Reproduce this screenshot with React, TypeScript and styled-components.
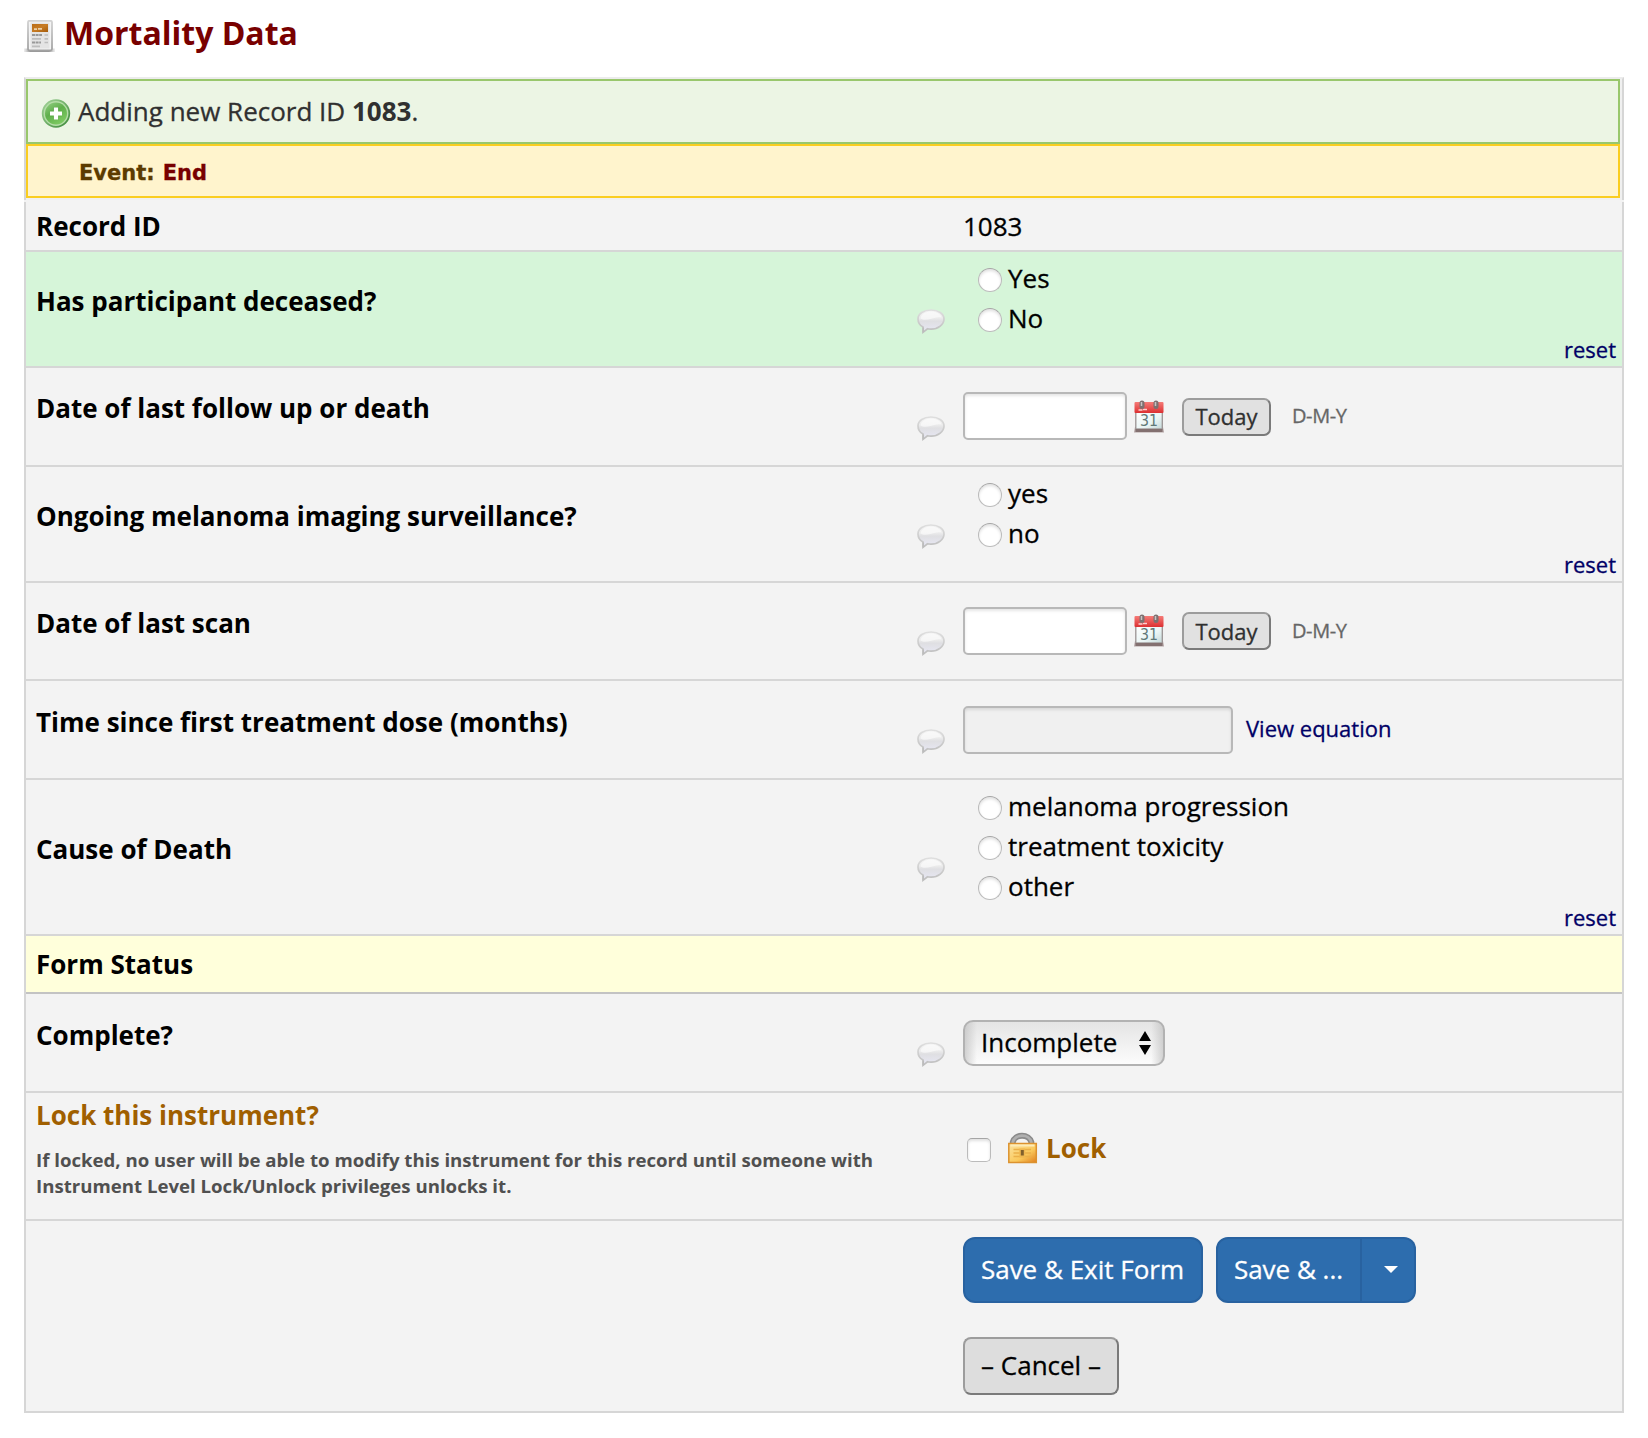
import React from 'react';
import styled, { createGlobalStyle, css } from 'styled-components';

const GlobalStyle = createGlobalStyle`
  * { box-sizing: border-box; }
  body {
    margin: 0;
    background: #fff;
    color: #000;
    font-family: 'Open Sans', 'Noto Sans', sans-serif;
    font-size: 26px;
    line-height: 36px;
    -webkit-text-stroke: 0.3px;
  }
  b, strong { -webkit-text-stroke: 0; }
  button, input, select { font: inherit; margin: 0; -webkit-text-stroke: inherit; }
`;

const Page = styled.main`
  width: 1648px;
  padding: 11px 24px 25px;
`;

const Title = styled.h1`
  display: flex;
  align-items: center;
  gap: 8px;
  height: 44px;
  margin: 0 0 22px;
  color: #780000;
  font-size: 32px;
  font-weight: 700;
  line-height: 44px;
  -webkit-text-stroke: 0;
  svg { margin-top: 6px; }
`;

const Banners = styled.section`
  height: 123px;
  padding-right: 2px;
  border: 2px solid #d6d6d6;
  border-top-color: #ececec;
  border-bottom: 0;
  background: #f0f0f0;
`;

const RecordBanner = styled.div`
  display: flex;
  align-items: center;
  gap: 7px;
  height: 65px;
  padding: 3px 13px 0;
  border: 2px solid #99c76c;
  background: #ecf5e4;
  color: #303030;
  p { margin: 0 0 5px; }
`;

const EventBanner = styled.div`
  display: flex;
  align-items: center;
  gap: 8px;
  height: 54px;
  padding: 3px 0 0 51px;
  border: 2px solid #facd20;
  background: #fff4cd;
  color: #5c3b00;
  font-family: 'DejaVu Sans', Verdana, sans-serif;
  font-size: 21px;
  font-weight: 700;
  -webkit-text-stroke: 0.3px;
  strong { color: #780000; -webkit-text-stroke: 0.3px; }
`;

const Form = styled.form`
  margin-top: 2px;
  border: solid #d6d6d6;
  border-width: 0 2px;
  box-shadow: 0 -2px 0 #f3f3f3;
`;

const Row = styled.div<{ $h: number; $tone?: string; $line?: string }>`
  display: grid;
  grid-template-columns: 884px 53px 1fr;
  height: ${(p) => p.$h}px;
  border-bottom: 2px solid ${(p) => p.$line || '#d6d6d6'};
  background: ${(p) => p.$tone || '#f3f3f3'};
`;

const Label = styled.div<{ $lift?: number }>`
  display: flex;
  flex-direction: column;
  justify-content: center;
  padding: 0 0 ${(p) => p.$lift || 0}px 10px;
  font-weight: 700;
  white-space: nowrap;
  -webkit-text-stroke: 0;
`;

const LockTitle = styled.div`
  color: #a05f00;
`;

const LockNote = styled.div`
  margin-top: 14px;
  color: #505050;
  font-size: 18.64px;
  line-height: 26px;
`;

const CommentCell = styled.div`
  display: flex;
  align-items: center;
  padding: 24px 0 0 6px;
`;

const Value = styled.div`
  display: flex;
  align-items: center;
`;

const Choices = styled.div`
  display: flex;
  flex-direction: column;
  padding: 8px 6px 0 15px;
`;

const Choice = styled.label`
  display: flex;
  align-items: center;
  gap: 6px;
  height: 40px;
  span { margin-bottom: 4px; }
`;

const toggle = css`
  appearance: none;
  width: 24px;
  height: 24px;
  border: 1px solid #bbb;
  border-top-color: #a5a5a5;
  background: #fff;
  box-shadow: inset 0 2px 3px rgba(0, 0, 0, 0.12);
`;

const Radio = styled.input`
  ${toggle}
  border-radius: 50%;
`;

const Checkbox = styled.input`
  ${toggle}
  margin-left: 4px;
  border-radius: 5px;
`;

const link = css`
  color: #000066;
  font-size: 22px;
  text-decoration: none;
`;

const Reset = styled.a`
  ${link}
  align-self: flex-end;
  height: 26px;
  line-height: 18px;
`;

const EquationLink = styled.a`
  ${link}
  margin: 0 0 3px 13px;
`;

const TextBox = styled.input<{ $w: number }>`
  width: ${(p) => p.$w}px;
  height: 48px;
  margin-bottom: ${(p) => (p.readOnly ? 0 : 1)}px;
  padding: 0 8px;
  border: 2px solid #b8b8b8;
  border-radius: 5px;
  background: ${(p) => (p.readOnly ? '#f0f0f0' : '#fff')};
  box-shadow: inset 0 2px 3px rgba(0, 0, 0, 0.1);
`;

const CalendarSlot = styled.span`
  display: flex;
  margin: 0 0 1px 6px;
`;

const outset = css`
  border: 2px solid;
  border-color: #9c9c9c #7a7a7a #7a7a7a #9c9c9c;
`;

const TodayButton = styled.button`
  ${outset}
  width: 89px;
  height: 38px;
  margin-left: 17px;
  padding: 0 0 1px;
  border-radius: 7px;
  background: #e1e1e1;
  color: #303030;
  font-size: 22px;
  line-height: 30px;
`;

const FormatHint = styled.span`
  margin: 0 0 1px 21px;
  color: #666;
  font-size: 20px;
  letter-spacing: -0.4px;
`;

const Dropdown = styled.button`
  display: flex;
  align-items: center;
  justify-content: space-between;
  width: 202px;
  height: 46px;
  padding: 0 12px 0 16px;
  border: 2px solid #b2b2b2;
  border-radius: 10px;
  background:
    linear-gradient(90deg, rgba(190,190,190,.65), transparent 6%, transparent 94%, rgba(190,190,190,.65)),
    linear-gradient(#e4e4e4, #fcfcfc);
  color: #000;
  span { margin-bottom: 1px; }
`;

const LockLabel = styled.label`
  display: flex;
  align-items: center;
  gap: 8px;
  margin-left: 16px;
  color: #a05f00;
  font-weight: 700;
  -webkit-text-stroke: 0;
  svg { margin-bottom: 6px; }
  span { margin-bottom: 5px; }
`;

const LockValue = styled(Value)`
  padding-bottom: 12px;
`;

const Actions = styled.div`
  display: flex;
  flex-direction: column;
  gap: 34px;
  padding-top: 16px;
`;

const SaveLine = styled.div`
  display: flex;
  gap: 13px;
`;

const blue = css`
  height: 66px;
  border: 2px solid #2862a0;
  background: #2d6dae;
  color: #fff;
`;

const SaveExit = styled.button`
  ${blue}
  width: 240px;
  padding: 0 1px 2px 0;
  border-radius: 12px;
`;

const SaveSplit = styled.div`
  display: flex;
`;

const SaveMain = styled.button`
  ${blue}
  width: 146px;
  padding: 0 1px 2px 0;
  border-radius: 12px 0 0 12px;
`;

const SaveMore = styled.button`
  ${blue}
  display: grid;
  place-items: center;
  width: 54px;
  padding: 0 0 2px 5px;
  border-left: 0;
  border-radius: 0 12px 12px 0;
`;

const Cancel = styled.button`
  ${outset}
  width: 156px;
  height: 58px;
  padding: 0 0 2px;
  border-radius: 8px;
  background: #ddd;
  color: #000;
`;

const PageIcon = () => (
  <svg width="32" height="32" viewBox="0 0 32 32">
    <defs>
      <linearGradient id="pgB" x1="0" y1="0" x2="1" y2="1">
        <stop offset="0" stopColor="#b96d18" /><stop offset="0.5" stopColor="#c77c25" /><stop offset="1" stopColor="#a55b0b" />
      </linearGradient>
      <linearGradient id="pgS" x1="0" y1="0" x2="0" y2="1">
        <stop offset="0" stopColor="#d2d2d2" /><stop offset="1" stopColor="#a2a2a2" />
      </linearGradient>
      <linearGradient id="pgF" x1="0" x2="1"><stop offset="0" stopColor="#aaa" stopOpacity="0.2" /><stop offset=".2" stopColor="#999" /><stop offset=".8" stopColor="#999" /><stop offset="1" stopColor="#aaa" stopOpacity="0.2" /></linearGradient>
    </defs>
    <rect x="0" y="28.500" width="31" height="3.500" fill="url(#pgF)" />
    <rect x="4" y="0.800" width="24" height="29.500" rx="1.500" fill="#f4f4f4" stroke="url(#pgS)" strokeWidth="1.800" />
    <rect x="6.500" y="2.500" width="19" height="26" fill="#e4e4e4" />
    <rect x="8" y="4" width="16" height="8" fill="url(#pgB)" />
    <path d="M10 9.200h3M14 8.800h4" stroke="#ecd0a8" strokeWidth="1.800" />
    <path d="M8 15h10M8 22.500h9" stroke="#999" strokeWidth="2.200" strokeDasharray="3 .6" />
    <path d="M8 18.800h9M8 26.300h8M20.500 15h3.500M20.500 18.800h3.500M20.500 22.500h3.500" stroke="#bdbdbd" strokeWidth="1.700" />
  </svg>
);

const AddIcon = () => (
  <svg width="30" height="30" viewBox="0 0 30 30">
    <defs>
      <linearGradient id="addG" x1="0" y1="0" x2="0.6" y2="1">
        <stop offset="0" stopColor="#94cf84" /><stop offset="0.5" stopColor="#5faf4c" /><stop offset="1" stopColor="#7cc960" />
      </linearGradient>
      <linearGradient id="addR" x1="0" y1="0" x2="1" y2="1">
        <stop offset="0" stopColor="#a4d49a" /><stop offset="1" stopColor="#3c8938" />
      </linearGradient>
    </defs>
    <circle cx="15" cy="15.500" r="13.300" fill="#b5dda8" stroke="url(#addR)" strokeWidth="1.800" />
    <circle cx="15" cy="15.500" r="11" fill="url(#addG)" />
    <path d="M15 9.500v12M9 15.500h12" stroke="#4c9a3d" strokeWidth="6" opacity=".35" />
    <path d="M15 9.500v12M9 15.500h12" stroke="#fff" strokeWidth="4.200" />
  </svg>
);

const CommentIcon = () => (
  <svg width="30" height="27" viewBox="0 0 30 27">
    <defs>
      <linearGradient id="cmG" x1="0" y1="0" x2="0" y2="1">
        <stop offset="0" stopColor="#f3f3f3" /><stop offset="0.35" stopColor="#ececec" /><stop offset="0.5" stopColor="#dfdfe2" /><stop offset="1" stopColor="#e8e8f6" />
      </linearGradient>
      <linearGradient id="cmS" x1="0" y1="0" x2="0" y2="1">
        <stop offset="0" stopColor="#dedede" /><stop offset="1" stopColor="#bdbdbd" />
      </linearGradient>
    </defs>
    <path d="M15 2C7.500 2 2 5.800 2 11c0 3.800 2.400 6.600 5 8.100v5.200l4.500-3.500c1.100.3 2.300.4 3.500.4 7.200 0 13-4.700 13-10.200S22.300 2 15 2z" fill="url(#cmG)" stroke="url(#cmS)" strokeWidth="1.700" />
    <path d="M4.500 10.500C5 6 10 3.500 15 3.500s10 2.500 10.500 6c-4-1-8 .5-11 1.500-4 1.300-8 1-10-.5z" fill="#fff" opacity=".55" />
    <path d="M7.300 19.500v4.500" stroke="#bcbcbc" strokeWidth="1.500" />
  </svg>
);

const DayNumber = styled.text`
  font-family: 'DejaVu Sans', sans-serif;
  font-size: 15px;
  font-weight: 400;
  -webkit-text-stroke: 0.5px #5f7878;
`;

const CalendarIcon = () => (
  <svg width="32" height="33" viewBox="0 0 32 33">
    <defs>
      <linearGradient id="calR" x1="0" y1="0" x2="0" y2="1">
        <stop offset="0" stopColor="#f57b77" /><stop offset="1" stopColor="#dc3032" />
      </linearGradient>
      <linearGradient id="calP" x1="0" y1="0" x2="1" y2="1">
        <stop offset="0" stopColor="#fff" /><stop offset="0.6" stopColor="#eaf5f5" /><stop offset="1" stopColor="#c4d8d8" />
      </linearGradient>
    </defs>
    <path d="M2 27h28l1 5.500H1z" fill="#b3a5a5" />
    <rect x="2.800" y="11" width="26.500" height="18" fill="url(#calP)" stroke="#9a9393" strokeWidth="1.300" />
    <rect x="2.500" y="29" width="27" height="3" fill="#837070" />
    <rect x="1.500" y="2" width="29" height="11" rx="1" fill="url(#calR)" />
    <path d="M5.500 10h4M10 9.500h4" stroke="#fbd0ce" strokeWidth="1.600" />
    <path d="M9 3v3.500M23 3v3.500" stroke="#7d7070" strokeWidth="5" strokeLinecap="round" />
    <path d="M8.500 2v4M22.500 2v4" stroke="#c9c2c2" strokeWidth="1.500" />
    <DayNumber x="16" y="26.300" textAnchor="middle" fill="#5f7878" textLength="18" lengthAdjust="spacingAndGlyphs">31</DayNumber>
  </svg>
);

const LockIcon = () => (
  <svg width="31" height="33" viewBox="0 0 31 33">
    <defs>
      <linearGradient id="lkG" x1="0" y1="0" x2="1" y2="1">
        <stop offset="0" stopColor="#fbe3a0" /><stop offset="0.6" stopColor="#fac95c" /><stop offset="1" stopColor="#e0801e" />
      </linearGradient>
    </defs>
    <path d="M5.800 14V11a9.500 8.200 0 0 1 18.500 0v3" fill="none" stroke="#8b8b8b" strokeWidth="6" />
    <path d="M5.800 14V11a9.500 8.200 0 0 1 18.500 0v3" fill="none" stroke="#b0b0b0" strokeWidth="2.800" />
    <rect x="1.800" y="12.500" width="27.500" height="19" fill="url(#lkG)" stroke="#dc922f" strokeWidth="1.500" />
    <path d="M3.500 14.500h24" stroke="#fdebb8" strokeWidth="2" />
    <path d="M6.500 18.500h17.500M6.500 22h17.500M6.500 25.500h17.500" stroke="#eab04a" strokeWidth="1.500" />
    <rect x="12.300" y="17.500" width="6" height="9" fill="#efb850" />
    <path d="M15.300 19v5.500" stroke="#80602c" strokeWidth="3" />
  </svg>
);

const SortArrows = () => (
  <svg width="12" height="24" viewBox="0 0 12 24">
    <path d="M6 0l6 10H0zM6 24l6-10H0z" fill="#000" />
  </svg>
);

const Caret = () => (
  <svg width="14" height="7" viewBox="0 0 14 7"><path d="M0 0h14L7 7z" fill="#fff" /></svg>
);

type ChoiceRowProps = { label: string; name: string; options: string[]; height: number; tone?: string };

const ChoiceRow = ({ label, name, options, height, tone }: ChoiceRowProps) => (
  <Row $h={height} $tone={tone}>
    <Label $lift={16}>{label}</Label>
    <CommentCell><CommentIcon /></CommentCell>
    <Choices>
      {options.map((o) => (
        <Choice key={o}><Radio type="radio" name={name} /><span>{o}</span></Choice>
      ))}
      <Reset href="#">reset</Reset>
    </Choices>
  </Row>
);

const DateRow = ({ label, height }: { label: string; height: number }) => (
  <Row $h={height}>
    <Label $lift={17}>{label}</Label>
    <CommentCell><CommentIcon /></CommentCell>
    <Value>
      <TextBox $w={164} type="text" />
      <CalendarSlot><CalendarIcon /></CalendarSlot>
      <TodayButton type="button">Today</TodayButton>
      <FormatHint>D-M-Y</FormatHint>
    </Value>
  </Row>
);

export default function App() {
  return (
    <>
      <GlobalStyle />
      <Page>
        <Title><PageIcon /><span>Mortality Data</span></Title>
        <Banners>
          <RecordBanner>
            <AddIcon />
            <p>Adding new Record ID <b>1083</b>.</p>
          </RecordBanner>
          <EventBanner><span>Event:</span><strong>End</strong></EventBanner>
        </Banners>
        <Form>
          <Row $h={50}>
            <Label>Record ID</Label>
            <span />
            <Value>1083</Value>
          </Row>
          <ChoiceRow label="Has participant deceased?" name="deceased" options={['Yes', 'No']} height={116} tone="#d6f5d9" />
          <DateRow label="Date of last follow up or death" height={99} />
          <ChoiceRow label="Ongoing melanoma imaging surveillance?" name="imaging" options={['yes', 'no']} height={116} />
          <DateRow label="Date of last scan" height={98} />
          <Row $h={99}>
            <Label $lift={16}>Time since first treatment dose (months)</Label>
            <CommentCell><CommentIcon /></CommentCell>
            <Value>
              <TextBox $w={270} type="text" readOnly />
              <EquationLink href="#">View equation</EquationLink>
            </Value>
          </Row>
          <ChoiceRow label="Cause of Death" name="cause" options={['melanoma progression', 'treatment toxicity', 'other']} height={156} />
          <Row $h={58} $tone="#ffffdb" $line="#c3c3c3">
            <Label>Form Status</Label>
          </Row>
          <Row $h={99}>
            <Label $lift={16}>Complete?</Label>
            <CommentCell><CommentIcon /></CommentCell>
            <Value>
              <Dropdown type="button"><span>Incomplete</span><SortArrows /></Dropdown>
            </Value>
          </Row>
          <Row $h={128}>
            <Label $lift={16}>
              <LockTitle>Lock this instrument?</LockTitle>
              <LockNote>
                If locked, no user will be able to modify this instrument for this record until someone with<br />
                Instrument Level Lock/Unlock privileges unlocks it.
              </LockNote>
            </Label>
            <span />
            <LockValue>
              <Checkbox type="checkbox" id="lock" />
              <LockLabel htmlFor="lock"><LockIcon /><span>Lock</span></LockLabel>
            </LockValue>
          </Row>
          <Row $h={192}>
            <span />
            <span />
            <Actions>
              <SaveLine>
                <SaveExit type="button">Save &amp; Exit Form</SaveExit>
                <SaveSplit>
                  <SaveMain type="button">Save &amp; ...</SaveMain>
                  <SaveMore type="button" aria-label="More save options"><Caret /></SaveMore>
                </SaveSplit>
              </SaveLine>
              <Cancel type="button">– Cancel –</Cancel>
            </Actions>
          </Row>
        </Form>
      </Page>
    </>
  );
}
